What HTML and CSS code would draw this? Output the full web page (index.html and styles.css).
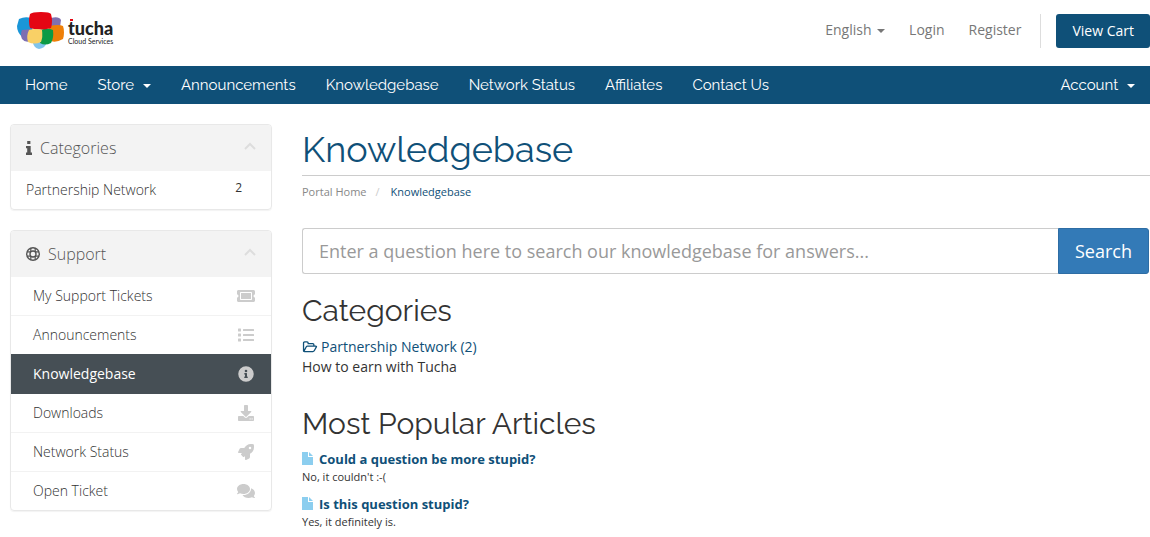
FILE: index.html
```html
<!DOCTYPE html>
<html lang="en">
<head>
<meta charset="utf-8">
<meta name="viewport" content="width=device-width, initial-scale=1">
<title>Knowledgebase - Tucha</title>
<link rel="stylesheet" href="styles.css">
</head>
<body>
<header class="header">
  <a class="logo" href="#" aria-label="tucha Cloud Services">
    <svg class="logo-mark" viewBox="0 0 48 38" aria-hidden="true">
      <path fill="#7fc4ec" d="M16 31 Q22 28 29 32 Q28 36 22 37 Q17 36 16 31Z"/>
      <path fill="#8070b0" d="M34 6 Q42 4 44 8 L43 15 L34 16Z"/>
      <path fill="#1a96d8" d="M2 7 Q8 4 14 6 L16 22 L5 25 Q0 20 0 14Z"/>
      <path fill="#7d6fb2" d="M5 18 L14 17 L14 29 Q8 31 5 27 Q3 22 5 18Z"/>
      <path fill="#ee7f08" d="M32 14 Q42 12 46 14 Q48 20 46 27 Q39 31 34 29 Q30 21 32 14Z"/>
      <path fill="#0c9a45" d="M23 18 Q31 15 36 18 Q37 26 34 31 Q28 34 23 31Z"/>
      <path fill="#e40613" d="M13 2 Q15 0 24 0 Q33 0 34 2 Q36 9 34 16 Q23 19 13 16 Q11 9 13 2Z"/>
      <path fill="#f9d066" d="M12 18 Q19 16 25 18 Q26 25 24 30 Q17 33 11 30 Q9 24 12 18Z"/>
    </svg>
    <span class="logo-text"><span class="logo-name">tucha</span><span class="logo-sub">Cloud Services</span></span>
  </a>
  <div class="top-nav">
    <button class="top-link" type="button">English <span class="caret"></span></button>
    <a class="top-link" href="#">Login</a>
    <a class="top-link" href="#">Register</a>
    <div class="cart-box"><a class="cart" href="#">View Cart</a></div>
  </div>
</header>

<nav class="menu">
  <a href="#">Home</a>
  <button type="button">Store <span class="caret"></span></button>
  <a href="#">Announcements</a>
  <a href="#">Knowledgebase</a>
  <a href="#">Network Status</a>
  <a href="#">Affiliates</a>
  <a href="#">Contact Us</a>
  <button class="account" type="button">Account <span class="caret"></span></button>
</nav>

<div class="page">
  <aside class="sidebar">
    <section class="panel">
      <h3 class="panel-title">
        <svg class="info-i" viewBox="0 0 6 14" aria-hidden="true"><path d="M1.2 0h3.2v3H1.2zM0 5h4.7v6.6H6V14H0v-2.4h1.2V7.3H0z"/></svg>
        <span>Categories</span>
        <svg class="chevron" viewBox="0 0 12 8" aria-hidden="true"><path d="M1 7l5-5 5 5"/></svg>
      </h3>
      <a class="item category" href="#"><span>Partnership Network</span><span class="count">2</span></a>
    </section>
    <section class="panel support">
      <h3 class="panel-title">
        <svg class="ring" viewBox="0 0 14 14" aria-hidden="true"><g fill="none" stroke="currentColor"><circle cx="7" cy="7" r="6.300" stroke-width="1.400"/><circle cx="7" cy="7" r="3" stroke-width="1.400"/><path stroke-width="1.200" d="M4.800 1v4M9.200 1v4M4.800 9v4M9.200 9v4M1 4.800h4M1 9.200h4M9 4.800h4M9 9.200h4"/></g></svg>
        <span>Support</span>
        <svg class="chevron" viewBox="0 0 12 8" aria-hidden="true"><path d="M1 7l5-5 5 5"/></svg>
      </h3>
      <a class="item" href="#"><span>My Support Tickets</span>
        <svg class="icon" viewBox="0 0 576 512" aria-hidden="true"><path d="M128 160h320v192H128V160zm400 96c0 26.500 21.500 48 48 48v96c0 26.500-21.500 48-48 48H48c-26.500 0-48-21.500-48-48v-96c26.500 0 48-21.500 48-48s-21.500-48-48-48v-96c0-26.500 21.500-48 48-48h480c26.500 0 48 21.500 48 48v96c-26.500 0-48 21.500-48 48zm-48-104c0-13.300-10.700-24-24-24H120c-13.300 0-24 10.700-24 24v208c0 13.300 10.700 24 24 24h336c13.300 0 24-10.700 24-24V152z"/></svg></a>
      <a class="item" href="#"><span>Announcements</span>
        <svg class="icon" viewBox="-32 0 576 512" aria-hidden="true"><path d="M16 48h64q16 0 16 16v64q0 16-16 16H16q-16 0-16-16V64q0-16 16-16zm0 160h64q16 0 16 16v64q0 16-16 16H16q-16 0-16-16v-64q0-16 16-16zm0 160h64q16 0 16 16v64q0 16-16 16H16q-16 0-16-16v-64q0-16 16-16zM176 64h320q16 0 16 16v32q0 16-16 16H176q-16 0-16-16V80q0-16 16-16zm0 160h320q16 0 16 16v32q0 16-16 16H176q-16 0-16-16v-32q0-16 16-16zm0 160h320q16 0 16 16v32q0 16-16 16H176q-16 0-16-16v-32q0-16 16-16z"/></svg></a>
      <a class="item active" href="#" aria-current="page"><span>Knowledgebase</span>
        <svg class="icon" viewBox="-32 0 576 512" aria-hidden="true"><path fill-rule="evenodd" d="M256 8a248 248 0 1 0 0 496 248 248 0 0 0 0-496zm0 110a42 42 0 1 1 0 84 42 42 0 0 1 0-84zm56 254q0 12-12 12h-88q-12 0-12-12v-24q0-12 12-12h12v-64h-12q-12 0-12-12v-24q0-12 12-12h64q12 0 12 12v100h12q12 0 12 12z"/></svg></a>
      <a class="item" href="#"><span>Downloads</span>
        <svg class="icon" viewBox="-32 0 576 512" aria-hidden="true"><path fill-rule="evenodd" d="M216 0h80c13.300 0 24 10.700 24 24v168h87.700c17.800 0 26.700 21.500 14.100 34.100L269.700 378.300c-7.500 7.500-19.800 7.500-27.300 0L90.100 226.100c-12.600-12.600-3.700-34.100 14.100-34.100H192V24c0-13.300 10.700-24 24-24zm296 376v112c0 13.300-10.700 24-24 24H24c-13.300 0-24-10.700-24-24V376c0-13.300 10.700-24 24-24h146.700l49 49c20.100 20.100 52.500 20.100 72.600 0l49-49H488c13.300 0 24 10.700 24 24zm-124 88a20 20 0 1 0 0-40 20 20 0 0 0 0 40zm64 0a20 20 0 1 0 0-40 20 20 0 0 0 0 40z"/></svg></a>
      <a class="item" href="#"><span>Network Status</span>
        <svg class="icon" viewBox="-32 0 576 512" aria-hidden="true"><path fill-rule="evenodd" d="M505 19c-1-6-6-11-12-12-32-7-57-7-82-7-103 0-165 55-211 128H95c-16 0-35 12-43 26L3 253c-10 20 4 35 21 35h104l-22 22c-13 13-12 33 0 45l51 51c12 12 32 13 45 0l22-22v104c0 18 17 31 36 21l98-49c15-7 26-26 26-43V312c73-46 128-108 128-211 0-25 0-50-7-82zM384 168a40 40 0 1 1 0-80 40 40 0 0 1 0 80z"/></svg></a>
      <a class="item" href="#"><span>Open Ticket</span>
        <svg class="icon" viewBox="0 0 576 512" aria-hidden="true"><path d="M416 192c0-88.400-93.100-160-208-160S0 103.600 0 192c0 34.300 14.100 65.900 38 92-13.400 30.200-35.500 54.200-35.800 54.500-5.800 6-1 17.500 5.800 17.500 36.600 0 66.900-12.300 88.700-25C129 345 166 352 208 352c114.900 0 208-71.600 208-160zm122 220c23.900-26 38-57.700 38-92 0-66.900-53.500-124.200-129.300-148.100.9 6.600 1.300 13.300 1.300 20.100 0 105.900-107.700 192-240 192-10.800 0-21.300-.8-31.700-1.900C207.800 439.600 281.800 480 368 480c41.600 0 79-9.900 111.300-26.900 21.800 12.700 52.100 25 88.700 25 6.800 0 11.500-11.500 5.800-17.500-.3-.3-22.400-18.300-35.800-48.600z"/></svg></a>
    </section>
  </aside>

  <main class="content">
    <h1>Knowledgebase</h1>
    <nav class="crumbs" aria-label="Breadcrumb"><a href="#">Portal Home</a><span class="slash">/</span><span class="here">Knowledgebase</span></nav>
    <form class="search">
      <input type="text" aria-label="Search the knowledgebase" placeholder="Enter a question here to search our knowledgebase for answers...">
      <button type="submit">Search</button>
    </form>
    <h2>Categories</h2>
    <div class="category-entry">
      <a href="#"><svg class="folder" viewBox="0 0 16 13" aria-hidden="true"><path d="M1 10.500V2.200Q1 1 2.200 1h2.600Q6 1 6 2.200v.6h5q1.200 0 1.200 1.200v1.500M1.200 11.500L4 6.200q.4-.7 1.200-.7h9q1.200 0 .7.900l-2.300 4.200q-.5.900-1.500.9H2Q1 11.500 1 10.500"/></svg>Partnership Network (2)</a>
      <p>How to earn with Tucha</p>
    </div>
    <h2>Most Popular Articles</h2>
    <article class="article">
      <a href="#"><svg class="file" viewBox="0 0 11 13" aria-hidden="true"><path d="M0 0h6v5h5v8H0zM7 0l4 4H7z"/></svg>Could a question be more stupid?</a>
      <p>No, it couldn't :-(</p>
    </article>
    <article class="article">
      <a href="#"><svg class="file" viewBox="0 0 11 13" aria-hidden="true"><path d="M0 0h6v5h5v8H0zM7 0l4 4H7z"/></svg>Is this question stupid?</a>
      <p>Yes, it definitely is.</p>
    </article>
  </main>
</div>
</body>
</html>
```
FILE: styles.css
```css
* { box-sizing: border-box; }
body { margin: 0; background: #fff; color: #333; font: 14px/20px "Open Sans", sans-serif; }
a { color: #0f5078; text-decoration: none; }
button { border: 0; background: none; padding: 0; font: inherit; color: inherit; cursor: pointer; }
h1, h2, h3, p { margin: 0; font-weight: 300; }
svg { fill: currentColor; flex: none; }
.caret { display: inline-block; border: 4px solid transparent; border-top-color: currentColor; border-bottom: 0; vertical-align: middle; }

.header { display: flex; justify-content: space-between; align-items: flex-start; padding: 12px 0 16px 17px; }
.logo { display: flex; gap: 3px; color: #222; }
.logo-mark { width: 48px; height: 38px; }
.logo-text { display: flex; flex-direction: column; padding-top: 7px; }
.logo-name { font: 900 18px/18px Lato, sans-serif; background: linear-gradient(#e40613, #e40613) 2px 0 / 3px 2px no-repeat; }
.logo-sub { font: 400 7px/9px Lato, sans-serif; }
.top-nav { display: flex; align-items: flex-start; padding-top: 2px; }
.top-link { color: #777; line-height: 20px; margin: 6px 24px 0 0; }
.top-link .caret { margin-left: 2px; }
.cart-box { border-left: 1px solid #ddd; padding-left: 15px; margin-left: -5px; }
.cart { display: block; padding: 7px 16px; background: #0f5078; color: #fff; border-radius: 3px; font-size: 14px; font-weight: 500; }

.menu { display: flex; gap: 30px; height: 38px; align-items: center; background: #0f5078; padding: 0 15px 0 25px; color: #fff; font: 15px/20px Raleway, Lato, sans-serif; }
.menu a { color: #fff; }
.menu .caret { margin-left: 5px; }
.menu .account { margin-left: auto; }

.page { display: grid; grid-template-columns: 262px minmax(0, 1fr); gap: 30px; padding: 20px 0 0 10px; align-items: start; }
.sidebar { display: grid; gap: 20px; }
.panel { border: 1px solid #e8e8e8; border-radius: 4px; box-shadow: 0 1px 1px #0000000d; overflow: hidden; }
.panel-title { display: flex; align-items: center; height: 46px; padding: 0 15px; background: #f3f3f3; color: #555; font-size: 16px; line-height: 20px; gap: 8px; }
.info-i { width: 6px; height: 14px; }
.ring { width: 14px; height: 14px; }
.chevron { width: 12px; height: 8px; margin: 0 0 4px auto; fill: none; stroke: #ddd; stroke-width: 2; }
.item { display: flex; justify-content: space-between; align-items: center; height: 39px; padding: 0 16px 0 22px; border-bottom: 1px solid #f2f2f2; color: #333; font-weight: 300; }
.item:last-child { border-bottom: 0; height: 38px; }
.category { padding: 0 29px 0 15px; }
.count { font-size: 12px; padding-bottom: 4px; font-weight: 400; }
.icon { width: 18px; height: 16px; color: #ccc; }
.item.active { height: 40px; margin-top: -1px; background: #464f55; color: #fff; border-color: #464f55; font-weight: 400; }

.content { padding-top: 4px; }
h1 { color: #0f5078; font: 400 36px/42px Raleway, Lato, sans-serif; border-bottom: 1px solid #ccc; padding-bottom: 5px; }
.crumbs { display: flex; font-size: 11px; line-height: 16px; padding-top: 8px; }
.crumbs a { color: #888; }
.slash { color: #ccc; padding: 0 11px 0 9px; }
.here { color: #0f5078; }
.search { display: flex; height: 46px; margin: 28px 1px 20px 0; font-size: 18px; }
.search input { flex: 1; min-width: 0; border: 1px solid #ccc; border-right: 0; border-radius: 3px 0 0 3px; padding: 0 16px; font: inherit; color: #333; }
.search input::placeholder { color: #999; opacity: 1; }
.search button { padding: 0 16px; background: #337ab7; border: 1px solid #2e6da4; color: #fff; border-radius: 0 3px 3px 0; }
h2 { font: 400 30px/33px Raleway, Lato, sans-serif; margin-bottom: 10px; }
.category-entry { margin-bottom: 30px; font-weight: 400; }
.category-entry p, .article p { font-weight: 400; }
.folder { width: 16px; height: 12px; margin-right: 3px; fill: none; stroke: currentColor; stroke-width: 1.4; vertical-align: -1px; }
.article { margin-bottom: 9px; }
.article a { display: block; font-size: 13px; font-weight: 700; line-height: 18px; }
.article p { font-size: 11px; line-height: 18px; }
.file { width: 11px; height: 13px; margin-right: 6px; color: #8cceef; vertical-align: -1px; }
```
